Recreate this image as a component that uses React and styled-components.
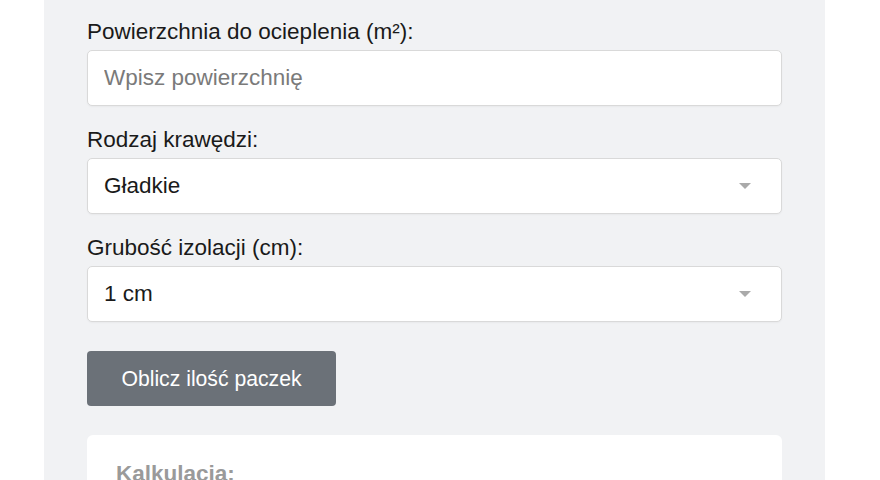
import React from 'react';
import styled, { createGlobalStyle } from 'styled-components';

const GlobalStyle = createGlobalStyle`
    body {
        margin: 0;
        background: #ffffff;
        font-family: "Liberation Sans", Arial, sans-serif;
    }
`;

const Panel = styled.div`
    margin-left: 44px;
    width: 781px;
    height: 480px;
    box-sizing: border-box;
    padding: 19px 43px 0 43px;
    background: #f1f2f4;
    overflow: hidden;
`;

const Field = styled.div`
    display: flex;
    flex-direction: column;
    margin-bottom: ${p => (p.$last ? '29px' : '21px')};
`;

const Label = styled.label`
    font-size: 22.5px;
    line-height: 26px;
    color: #1a1a1a;
    margin-bottom: 5px;
`;

const Input = styled.input`
    box-sizing: border-box;
    height: 56px;
    padding: 0 16px;
    border: 1px solid #d9d9d9;
    border-radius: 5px;
    background: #fff;
    font-family: inherit;
    font-size: 22.5px;
    color: #1a1a1a;
    box-shadow: 0 1px 2px rgba(0, 0, 0, 0.04);
    outline: none;

    &::placeholder {
        color: #7a7a7a;
    }
`;

const SelectBox = styled.div`
    box-sizing: border-box;
    height: 56px;
    display: flex;
    align-items: center;
    padding: 0 16px;
    border: 1px solid #d9d9d9;
    border-radius: 5px;
    background: #fff;
    font-size: 22.5px;
    color: #1a1a1a;
    box-shadow: 0 1px 2px rgba(0, 0, 0, 0.04);
`;

const Caret = styled.span`
    margin-left: auto;
    margin-right: 14px;
    width: 0;
    height: 0;
    border-left: 6px solid transparent;
    border-right: 6px solid transparent;
    border-top: 6px solid #aaaaaa;
`;

const Button = styled.button`
    display: block;
    width: 249px;
    height: 55px;
    border: none;
    border-radius: 4px;
    background: #6b7178;
    color: #fff;
    font-family: inherit;
    font-size: 21.2px;
    cursor: pointer;
`;

const Result = styled.div`
    margin-top: 29px;
    background: #fff;
    border-radius: 6px;
    padding: 26px 29px;
    height: 120px;
`;

const ResultTitle = styled.h3`
    margin: 0;
    font-size: 22.5px;
    line-height: 26px;
    font-weight: bold;
    color: #9a9a9a;
`;

function Select({ value }) {
    return (
        <SelectBox>
            {value}
            <Caret />
        </SelectBox>
    );
}

export default function App() {
    return (
        <>
            <GlobalStyle />
            <Panel>
                <Field>
                    <Label>Powierzchnia do ocieplenia (m²):</Label>
                    <Input placeholder="Wpisz powierzchnię" />
                </Field>
                <Field>
                    <Label>Rodzaj krawędzi:</Label>
                    <Select value="Gładkie" />
                </Field>
                <Field $last>
                    <Label>Grubość izolacji (cm):</Label>
                    <Select value="1 cm" />
                </Field>
                <Button>Oblicz ilość paczek</Button>
                <Result>
                    <ResultTitle>Kalkulacja:</ResultTitle>
                </Result>
            </Panel>
        </>
    );
}
